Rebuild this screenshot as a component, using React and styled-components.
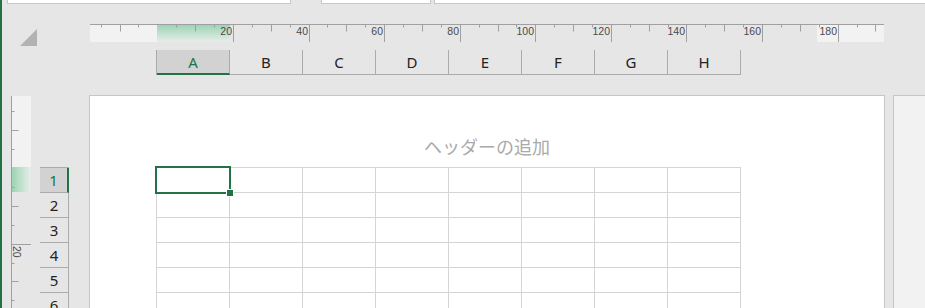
import React from 'react';
import styled, { createGlobalStyle } from 'styled-components';

const GREEN = '#217346';
const MM = 3.78;
const COLUMNS = ['A', 'B', 'C', 'D', 'E', 'F', 'G', 'H'];
const ROWS = [1, 2, 3, 4, 5, 6];

const GlobalStyle = createGlobalStyle`
  html, body {
    margin: 0;
    padding: 0;
    background: #e6e6e6;
  }
  body {
    font-family: "Noto Sans", "Noto Sans CJK JP", sans-serif;
  }
  * {
    box-sizing: border-box;
  }
`;

const Window = styled.div`
  width: 925px;
  height: 308px;
  overflow: hidden;
  border-left: 2px solid ${GREEN};
  background: #e6e6e6;
  display: flex;
  flex-direction: column;
`;

const TopStrip = styled.div`
  display: flex;
  flex: none;
  height: 4px;
`;

const Field = styled.div`
  height: 4px;
  background: #fff;
  border: 1px solid #c6c6c6;
  border-top: none;
  margin-left: ${(p) => p.$gap}px;
  ${(p) => (p.$width ? `width: ${p.$width}px; flex: none;` : 'flex: 1; margin-right: -4px;')}
`;

const Workspace = styled.div`
  flex: 1;
  min-height: 0;
  display: grid;
  grid-template-columns: 9px 20px 9px 29px 20px 796px 8px 1fr;
  grid-template-rows: 20px 18px 8px 25px 20px 1fr;
`;

const Corner = styled.div`
  grid-column: 2 / 5;
  grid-row: 2 / 5;
  align-self: start;
  justify-self: start;
  width: 17px;
  height: 17px;
  margin: 5px 0 0 9px;
  background: #b2b2b2;
  clip-path: polygon(100% 0, 100% 100%, 0 100%);
`;

const HRuler = styled.div`
  grid-column: 6;
  grid-row: 2;
  margin: 0 1px;
  position: relative;
  display: flex;
`;

const MarginFill = styled.div`
  flex: none;
  background: #f2f2f2;
  ${(p) => (p.$vertical ? `height: ${p.$size}px;` : `width: ${p.$size}px;`)}
`;

const SelectionFill = styled.div`
  flex: none;
  ${(p) =>
    p.$vertical
      ? `height: ${p.$size}px; background: linear-gradient(to right, #98d3b1, #e8eeea);`
      : `width: ${p.$size}px; background: linear-gradient(to bottom, #98d3b1, #e8eeea);`}
`;

const Spacer = styled.div`
  flex: 1;
`;

const TickLayer = styled.svg`
  position: absolute;
  inset: 0;
  width: 100%;
  height: 100%;
  overflow: hidden;

  line {
    stroke: #a0a0a0;
    stroke-width: 1;
  }
  text {
    font-family: "Liberation Sans", Arial, sans-serif;
    font-size: 10.5px;
    fill: #4a4a4a;
  }
`;

const VRuler = styled.div`
  grid-column: 2;
  grid-row: 6;
  margin-top: 1px;
  position: relative;
  display: flex;
  flex-direction: column;
`;

const ColHeaders = styled.div`
  grid-column: 6;
  grid-row: 4;
  margin-left: 67px;
  display: flex;
  border-left: 1px solid #ababab;
`;

const ColHead = styled.div`
  width: 73px;
  height: 25px;
  display: flex;
  align-items: center;
  justify-content: center;
  font-size: 15px;
  padding-top: ${(p) => (p.$selected ? '1px' : '0')};
  color: ${(p) => (p.$selected ? GREEN : '#222')};
  background: ${(p) => (p.$selected ? '#d2d2d2' : 'transparent')};
  border-right: 1px solid #ababab;
  border-bottom: ${(p) => (p.$selected ? `2px solid ${GREEN}` : '1px solid #ababab')};
`;

const RowHeaders = styled.div`
  grid-column: 4;
  grid-row: 6;
  margin-top: 72px;
  border-top: 1px solid #ababab;
  display: flex;
  flex-direction: column;
`;

const RowHead = styled.div`
  height: 25px;
  flex: none;
  display: flex;
  align-items: center;
  justify-content: center;
  font-size: 15px;
  color: ${(p) => (p.$selected ? GREEN : '#222')};
  background: ${(p) => (p.$selected ? '#d2d2d2' : 'transparent')};
  border-bottom: 1px solid #ababab;
  border-right: ${(p) => (p.$selected ? `2px solid ${GREEN}` : '1px solid #ababab')};
`;

const Page = styled.div`
  grid-column: 6;
  grid-row: 6;
  background: #fff;
  border: 1px solid #c6c6c6;
  border-bottom: none;
  display: flex;
  flex-direction: column;
  overflow: hidden;
`;

const HeaderZone = styled.div`
  flex: none;
  height: 71px;
  padding-top: 41px;
  text-align: center;
  font-family: "Noto Sans CJK JP", sans-serif;
  font-size: 18px;
  line-height: 18px;
  color: #aaaaaa;
`;

const SheetGrid = styled.div`
  position: relative;
  align-self: flex-start;
  margin-left: 66px;
  border-top: 1px solid #d4d4d4;
  border-left: 1px solid #d4d4d4;
`;

const SheetRow = styled.div`
  display: flex;
`;

const Cell = styled.div`
  width: 73px;
  height: 25px;
  border-right: 1px solid #d4d4d4;
  border-bottom: 1px solid #d4d4d4;
`;

const ActiveCell = styled.div`
  position: absolute;
  left: -2px;
  top: -2px;
  width: 76px;
  height: 28px;
  border: 2px solid ${GREEN};
`;

const FillHandle = styled.div`
  position: absolute;
  left: 69px;
  top: 21px;
  width: 8px;
  height: 8px;
  background: ${GREEN};
  border: 1px solid #fff;
`;

const NextPage = styled.div`
  grid-column: 8;
  grid-row: 6;
  background: #f2f2f2;
  border-left: 1px solid #c6c6c6;
  border-top: 1px solid #c6c6c6;
`;

function HorizontalTicks() {
  const marks = [];
  for (let mm = -15; mm <= 190; mm += 5) {
    if (mm === 0) continue;
    const x = Math.round(67.3 + mm * MM) + 0.5;
    if (mm > 0 && mm % 20 === 0) {
      marks.push(<line key={mm} x1={x} x2={x} y1={0} y2={18} />);
      marks.push(
        <text key={`t${mm}`} x={x - 1.5} y={10.5} textAnchor="end">
          {mm}
        </text>
      );
    } else {
      marks.push(<line key={mm} x1={x} x2={x} y1={0} y2={mm % 10 === 0 ? 7.5 : 3.5} />);
    }
  }
  return (
    <TickLayer>
      <line x1={0} x2={794} y1={0.5} y2={0.5} />
      {marks}
    </TickLayer>
  );
}

function VerticalTicks() {
  const marks = [];
  for (let mm = -15; mm <= 35; mm += 5) {
    if (mm === 0) continue;
    const y = Math.round(72 + mm * MM) + 0.5;
    if (mm > 0 && mm % 20 === 0) {
      marks.push(<line key={mm} x1={0} x2={20} y1={y} y2={y} />);
      marks.push(
        <text key={`t${mm}`} transform={`translate(1.5, ${y + 1.5}) rotate(90)`}>
          {mm}
        </text>
      );
    } else {
      marks.push(<line key={mm} x1={0} x2={mm % 10 === 0 ? 7.5 : 3.5} y1={y} y2={y} />);
    }
  }
  return (
    <TickLayer>
      <line x1={0.5} x2={0.5} y1={0} y2={400} />
      {marks}
    </TickLayer>
  );
}

export default function App() {
  return (
    <>
      <GlobalStyle />
      <Window>
        <TopStrip>
          <Field $gap={5} $width={284} />
          <Field $gap={30} $width={110} />
          <Field $gap={3} />
        </TopStrip>
        <Workspace>
          <Corner />
          <HRuler>
            <MarginFill $size={67} />
            <SelectionFill $size={73} />
            <Spacer />
            <MarginFill $size={67} />
            <HorizontalTicks />
          </HRuler>
          <ColHeaders>
            {COLUMNS.map((c, i) => (
              <ColHead key={c} $selected={i === 0}>
                {c}
              </ColHead>
            ))}
          </ColHeaders>
          <VRuler>
            <MarginFill $vertical $size={71} />
            <SelectionFill $vertical $size={25} />
            <VerticalTicks />
          </VRuler>
          <RowHeaders>
            {ROWS.map((r) => (
              <RowHead key={r} $selected={r === 1}>
                {r}
              </RowHead>
            ))}
          </RowHeaders>
          <Page>
            <HeaderZone>ヘッダーの追加</HeaderZone>
            <SheetGrid>
              {ROWS.map((r) => (
                <SheetRow key={r}>
                  {COLUMNS.map((c) => (
                    <Cell key={c} />
                  ))}
                </SheetRow>
              ))}
              <ActiveCell />
              <FillHandle />
            </SheetGrid>
          </Page>
          <NextPage />
        </Workspace>
      </Window>
    </>
  );
}
